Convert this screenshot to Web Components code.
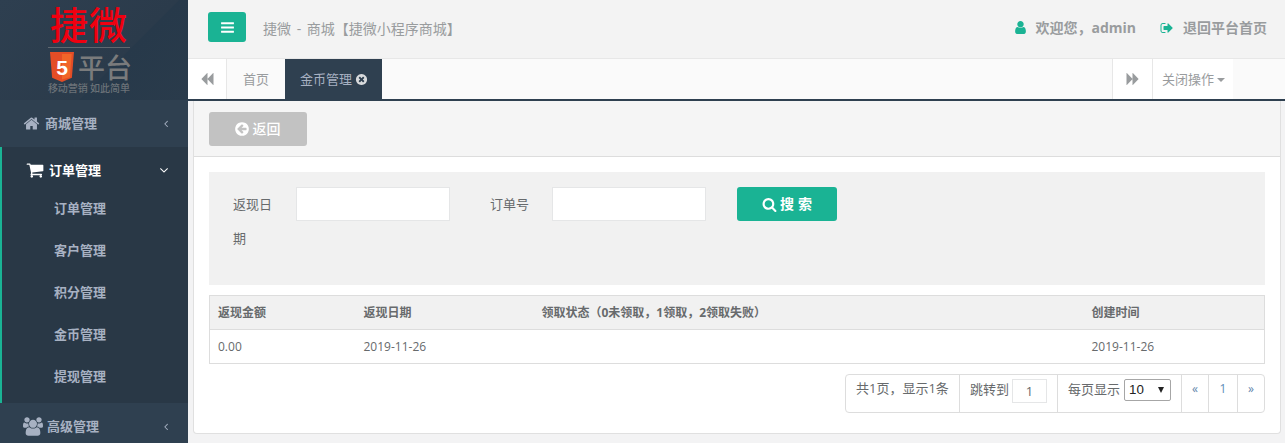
<!DOCTYPE html>
<html lang="zh-CN"><head><meta charset="utf-8"><title>捷微</title>
<style>
html,body{margin:0;padding:0;height:443px;overflow:hidden;background:#f3f3f4}
body{font:13px/1.42857 "Open Sans","Noto Sans CJK SC",sans-serif;color:#676a6c}
app-shell{height:443px}
</style></head><body>
<app-shell>
  <app-sidebar slot="side">
    <brand-logo></brand-logo>
    <nav-group label="商城管理" icon="home"></nav-group>
    <nav-group label="订单管理" icon="cart" open>
      <nav-sub>订单管理</nav-sub><nav-sub>客户管理</nav-sub><nav-sub>积分管理</nav-sub><nav-sub>金币管理</nav-sub><nav-sub>提现管理</nav-sub>
    </nav-group>
    <nav-group label="高级管理" icon="users"></nav-group>
  </app-sidebar>
  <top-bar></top-bar>
  <tab-bar></tab-bar>
  <page-card>
    <search-panel></search-panel>
    <data-table></data-table>
    <pager-bar></pager-bar>
  </page-card>
</app-shell>
<script>
const P={
home:['0 0 1792 1792','M1472 992v480q0 26-19 45t-45 19h-384v-384h-256v384h-384q-26 0-45-19t-19-45v-480q0-1 .5-3t.5-3l575-474 575 474q1 2 1 6zm223-69l-62 74q-8 9-21 11h-3q-13 0-21-7l-692-577-692 577q-12 8-24 7-13-2-21-11l-62-74q-8-10-7-23.5t11-21.5l719-599q32-26 76-26t76 26l244 204v-195q0-14 9-23t23-9h192q14 0 23 9t9 23v408l219 182q10 8 11 21.5t-7 23.5z'],
cart:['0 0 1792 1792','M704 1536q0 52-38 90t-90 38-90-38-38-90 38-90 90-38 90 38 38 90zm896 0q0 52-38 90t-90 38-90-38-38-90 38-90 90-38 90 38 38 90zm128-1088v512q0 24-16.5 42.5t-40.5 21.5l-1044 122q13 60 13 70 0 16-24 64h920q26 0 45 19t19 45-19 45-45 19h-1024q-26 0-45-19t-19-45q0-11 8-31.5t16-36 21.5-40 15.5-29.5l-177-823h-204q-26 0-45-19t-19-45 19-45 45-19h256q16 0 28.5 6.5t19.5 15.5 13 24.5 8 26 5.5 29.5 4.5 26h1201q26 0 45 19t19 45z'],
users:['0 0 1920 1792','M593 896q-162 5-265 128h-134q-82 0-138-40.5t-56-118.5q0-353 124-353 6 0 43.5 21t97.5 42.5 119 21.5q67 0 133-23-5 37-5 66 0 139 81 256zm1071 637q0 120-73 189.5t-194 69.5h-874q-121 0-194-69.5t-73-189.5q0-53 3.5-103.5t14-109 26.5-108.5 43-97.5 62-81 85.5-53.5 111.5-20q10 0 43 21.5t73 48 107 48 135 21.5 135-21.5 107-48 73-48 43-21.5q61 0 111.5 20t85.5 53.5 62 81 43 97.5 26.5 108.5 14 109 3.5 103.5zm-1024-1277q0 106-75 181t-181 75-181-75-75-181 75-181 181-75 181 75 75 181zm704 384q0 159-112.5 271.5t-271.5 112.5-271.5-112.5-112.5-271.5 112.5-271.5 271.5-112.5 271.5 112.5 112.5 271.5zm576 225q0 78-56 118.5t-138 40.5h-134q-103-123-265-128 81-117 81-256 0-29-5-66 66 23 133 23 59 0 119-21.5t97.5-42.5 43.5-21q124 0 124 353zm-128-609q0 106-75 181t-181 75-181-75-75-181 75-181 181-75 181 75 75 181z'],
bars:['0 0 1792 1792','M1664 1344v128q0 26-19 45t-45 19h-1408q-26 0-45-19t-19-45v-128q0-26 19-45t45-19h1408q26 0 45 19t19 45zm0-512v128q0 26-19 45t-45 19h-1408q-26 0-45-19t-19-45v-128q0-26 19-45t45-19h1408q26 0 45 19t19 45zm0-512v128q0 26-19 45t-45 19h-1408q-26 0-45-19t-19-45v-128q0-26 19-45t45-19h1408q26 0 45 19t19 45z'],
user:['0 0 1792 1792','M1536 1399q0 109-62.5 187t-150.5 78h-854q-88 0-150.5-78t-62.5-187q0-85 8.5-160.5t31.5-152 58.5-131 94-89 134.5-34.5q131 128 313 128t313-128q76 0 134.5 34.5t94 89 58.5 131 31.5 152 8.5 160.5zm-256-887q0 159-112.5 271.5t-271.5 112.5-271.5-112.5-112.5-271.5 112.5-271.5 271.5-112.5 271.5 112.5 112.5 271.5z'],
out:['0 0 1792 1792','M704 1440q0 4 1 20t.5 26.5-3 23.5-10 19.5-20.5 6.5h-320q-119 0-203.5-84.5t-84.5-203.5v-704q0-119 84.5-203.5t203.5-84.5h320q13 0 22.5 9.5t9.5 22.5q0 4 1 20t.5 26.5-3 23.5-10 19.5-20.5 6.5h-320q-66 0-113 47t-47 113v704q0 66 47 113t113 47h288l11.5 1 11.5 3 8 5.5 7 9 2 13.5zm928-544q0 26-19 45l-544 544q-19 19-45 19t-45-19-19-45v-288h-448q-26 0-45-19t-19-45v-384q0-26 19-45t45-19h448v-288q0-26 19-45t45-19 45 19l544 544q19 19 19 45z'],
search:['0 0 1792 1792','M1216 832q0-185-131.5-316.5t-316.5-131.5-316.5 131.5-131.5 316.5 131.5 316.5 316.5 131.5 316.5-131.5 131.5-316.5zm512 832q0 52-38 90t-90 38q-54 0-90-38l-343-342q-179 124-399 124-143 0-273.5-55.5t-225-150-150-225-55.5-273.5 55.5-273.5 150-225 225-150 273.5-55.5 273.5 55.5 225 150 150 225 55.5 273.5q0 220-124 399l343 343q37 37 37 90z'],
back:['0 0 1792 1792','M1683 141q19-19 32-13t13 32v1472q0 26-13 32t-32-13l-710-710q-9-9-13-19v710q0 26-13 32t-32-13l-710-710q-19-19-19-45t19-45l710-710q19-19 32-13t13 32v710q4-10 13-19z'],
fwd:['0 0 1792 1792','M109 1651q-19 19-32 13t-13-32v-1472q0-26 13-32t32 13l710 710q9 9 13 19v-710q0-26 13-32t32 13l710 710q19 19 19 45t-19 45l-710 710q-19 19-32 13t-13-32v-710q-4 10-13 19z'],
times:['0 0 1792 1792','M1277 1122q0-26-19-45l-181-181 181-181q19-19 19-45 0-27-19-46l-90-90q-19-19-46-19-26 0-45 19l-181 181-181-181q-19-19-45-19-27 0-46 19l-90 90q-19 19-19 46 0 26 19 45l181 181-181 181q-19 19-19 45 0 27 19 46l90 90q19 19 46 19 26 0 45-19l181-181 181 181q19 19 45 19 27 0 46-19l90-90q19-19 19-46zm387-226q0 209-103 385.5t-279.5 279.5-385.5 103-385.5-103-279.5-279.5-103-385.5 103-385.5 279.5-279.5 385.5-103 385.5 103 279.5 279.5 103 385.5z'],
circleLeft:['0 0 1792 1792','M1408 960v-128q0-26-19-45t-45-19h-502l189-189q19-19 19-45t-19-45l-91-91q-18-18-45-18t-45 18l-362 362-91 91q-18 18-18 45t18 45l91 91 362 362q18 18 45 18t45-18l91-91q18-18 18-45t-18-45l-189-189h502q26 0 45-19t19-45zm256-64q0 209-103 385.5t-279.5 279.5-385.5 103-385.5-103-279.5-279.5-103-385.5 103-385.5 279.5-279.5 385.5-103 385.5 103 279.5 279.5 103 385.5z'],
angleL:['0 0 640 1792','M627 544q0 13-10 23l-393 393 393 393q10 10 10 23t-10 23l-50 50q-10 10-23 10t-23-10l-466-466q-10-10-10-23t10-23l466-466q10-10 23-10t23 10l50 50q10 10 10 23z'],
angleD:['0 0 1792 1792','M1395 736q0 13-10 23l-466 466q-10 10-23 10t-23-10l-466-466q-10-10-10-23t10-23l50-50q10-10 23-10t23 10l393 393 393-393q10-10 23-10t23 10l50 50q10 10 10 23z']
};
const ico=(n,w,h,c,extra='')=>`<svg viewBox="${P[n][0]}" width="${w}" height="${h}" fill="${c}" style="display:block;flex:none;${extra}" aria-hidden="true"><path d="${P[n][1]}"/></svg>`;
const def=(name,html)=>customElements.define(name,class extends HTMLElement{
  connectedCallback(){ if(this.shadowRoot) return; const r=this.attachShadow({mode:'open'}); r.innerHTML=typeof html==='function'?html(this):html; }
});

def('app-shell',`<style>
:host{display:grid;grid-template-columns:188px 1fr;grid-template-rows:59px 42px 1fr;width:1285px}
.s{grid-row:1/4;display:block}
</style><slot name="side" class="s"></slot><slot></slot>`);

def('app-sidebar',`<style>:host{display:block;height:443px;background:#2f4050;overflow:hidden}</style><slot></slot>`);

def('brand-logo',`<style>
:host{display:block;height:100px;box-sizing:border-box;background:linear-gradient(135deg,#2e3f50 0,#2b3b4b 62%,#27394a 62.5%,#2a3b4b 100%);font-family:"Noto Sans CJK SC",sans-serif}
.w{width:84px;margin-left:47px;display:flex;flex-direction:column;align-items:center;padding-top:6px}
.t{color:#f00010;font-size:38px;font-weight:500;line-height:33px;letter-spacing:1px;height:41px;white-space:nowrap}
.r{height:1px;background:#5f6870;width:82px;margin-bottom:4px}
.m{display:flex;align-items:center;gap:4px;height:30px;width:82px;padding-left:2px;box-sizing:border-box}
.p{color:#7a7b7c;font-size:27px;font-weight:500;line-height:28px;white-space:nowrap}
.c{color:#6b7278;font-size:10px;line-height:12px;white-space:nowrap;font-weight:500}
svg text{font:900 22px "Liberation Sans",sans-serif}
</style><div class="w"><div class="t">捷微</div><div class="r"></div>
<div class="m"><svg width="24" height="30" viewBox="0 0 25 31" style="flex:none"><path d="M0 0h25l-2.2 26.6L12.5 31 2.2 26.6z" fill="#e44d26"/><path d="M12.5 2v26.6l8.2-2.4L22.6 2z" fill="#f16529"/><text x="12.5" y="23.5" text-anchor="middle" fill="#fff">5</text></svg><span class="p">平台</span></div>
<div class="c">移动营销 如此简单</div></div>`);

def('nav-group',h=>{
 const open=h.hasAttribute('open'), ic=h.getAttribute('icon');
 const size=ic==='users'?[20,19]:ic==='home'?[17,17]:[18,18];
 return `<style>
:host{display:block;font-weight:700;color:${open?'#fff':'#a7b1c2'};background:${open?'#293846':'#2f4050'};${open?'border-left:2px solid #1ab394;padding-bottom:5px;':''}}
.h{display:flex;align-items:center;height:47px;padding-left:${open?24:23}px;box-sizing:border-box;${open?'height:46px;margin-bottom:-5px':''}}
.i{width:${open?23:ic==='users'?24:22}px;flex:none}
.l{flex:1}
.c{margin-right:${open?17:20}px}
</style><div class="h"><span class="i">${ico(ic,size[0],size[1],open?'#fff':'#a7b1c2')}</span><span class="l">${h.getAttribute('label')}</span><span class="c">${open?ico('angleD',14,14,'#fff'):ico('angleL',4,13,'#a7b1c2')}</span></div><slot></slot>`;
});
def('nav-sub',`<style>:host{display:flex;align-items:center;height:42px;padding-left:52px;color:#a7b1c2;font-weight:700;box-sizing:border-box;padding-bottom:1px}</style><slot></slot>`);

def('top-bar',`<style>
:host{display:flex;align-items:center;background:#f3f3f3;padding:0 18px 0 20px;color:#999c9e;height:59px;box-sizing:border-box;border-bottom:1px solid #e7e7e7;font-size:14px}
.b{width:38px;height:30px;background:#1ab394;border-radius:3px;display:flex;align-items:center;justify-content:center;margin:0 17px 4px 0;flex:none}
.s{flex:1;color:#999c9e;word-spacing:2px}
.r{display:flex;align-items:center;font-weight:700;margin-bottom:2px}
</style><span class="b">${ico('bars',15,15,'#fff')}</span><span class="s">捷微 - 商城【捷微小程序商城】</span>
<span class="r">${ico('user',15,15,'#1ab394','margin-right:7px')}<span>欢迎您，admin</span>${ico('out',14,14,'#1ab394','margin:0 9px 0 24px')}<span>退回平台首页</span></span>`);

def('tab-bar',`<style>
:host{display:flex;height:42px;box-sizing:border-box;background:#fafafa;border-bottom:2px solid #2f4050;color:#999c9e}
.a{width:38px;display:flex;align-items:center;justify-content:center;background:#fff;border-right:1px solid #e7e7e7}
.t{padding:0 16px;display:flex;align-items:center}
.on{background:#2f4050;color:#a7b1c2;gap:3px;padding:0 15px}
.sp{flex:1}
.n{border-left:1px solid #e7e7e7;border-right:1px solid #e7e7e7;width:39px;background:#fff}
.d{width:80px;background:#fff;display:flex;align-items:center;padding-left:9px;box-sizing:border-box;gap:3px}
.e{width:52px}
.tri{width:0;height:0;border:4px solid transparent;border-top-color:#999c9e;border-bottom:0;margin-top:2px}
</style><span class="a">${ico('back',14,14,'#999c9e')}</span><span class="t">首页</span><span class="t on">金币管理${ico('times',13,13,'#d8dadc','margin-right:-1px')}</span><span class="sp"></span>
<span class="a n">${ico('fwd',14,14,'#999c9e')}</span><span class="d">关闭操作<i class="tri"></i></span><span class="e"></span>`);

def('page-card',`<style>
:host{display:block;margin:0 4px 9px 5px;background:#fff;border:1px solid #e0e0e0;border-top:0;border-radius:0 0 4px 4px;height:333px;box-sizing:border-box}
.h{height:56px;background:#f5f5f5;border-bottom:1px solid #ddd;padding:11px 15px 0;box-sizing:border-box}
.b{width:98px;height:34px;border-radius:3px;background:#c2c2c2;color:#fff;display:flex;align-items:center;justify-content:center;gap:3px;font-size:14px;font-weight:500;padding-right:2px;box-sizing:border-box}
.c{padding:15px 15px 0}
</style><div class="h"><div class="b">${ico('circleLeft',16,16,'#fff')}<span>返回</span></div></div><div class="c"><slot></slot></div>`);

def('search-panel',`<style>
:host{display:flex;align-items:flex-start;height:113px;box-sizing:border-box;background:#f1f1f1;padding:15px 0 0 24px;margin-bottom:10px;color:#676a6c}
label{width:42px;line-height:34px;flex:none}
.i{width:154px;height:34px;box-sizing:border-box;border:1px solid #e5e6e7;background:#fff;flex:none;display:block;padding:0;margin:0 40px 0 21px;outline:0}
.j{margin-right:31px}
label.k{width:41px;white-space:nowrap}
.b{width:100px;height:34px;background:#1ab394;border-radius:3px;color:#fff;font-weight:700;font-size:14px;display:flex;align-items:center;justify-content:center;gap:3px;flex:none}
.b span{letter-spacing:4px;margin-right:-4px}
</style><label>返现日期</label><input class="i" aria-label="返现日期"><label class="k">订单号</label><input class="i j" aria-label="订单号"><span class="b">${ico('search',15,15,'#fff')}<span>搜索</span></span>`);

def('data-table',`<style>
:host{display:block;margin-bottom:10px}
table{width:100%;border-collapse:collapse;table-layout:fixed;font-size:12px;color:#676a6c;border-left:1px solid #ddd;border-right:1px solid #ddd}
td,th{border-top:1px solid #ddd;border-bottom:1px solid #ddd;padding:0 8px;height:34px;text-align:left;box-sizing:border-box}
th{background:#f1f1f1;font-weight:700}
</style><table><colgroup><col style="width:146px"><col style="width:178px"><col style="width:550px"><col></colgroup>
<tr><th>返现金额</th><th>返现日期</th><th>领取状态（0未领取，1领取，2领取失败）</th><th>创建时间</th></tr>
<tr><td>0.00</td><td>2019-11-26</td><td></td><td>2019-11-26</td></tr></table>`);

def('pager-bar',`<style>
:host{display:flex;justify-content:flex-end}
.w{display:flex;height:39px;box-sizing:border-box;border:1px solid #ddd;border-radius:4px;color:#676a6c;background:#fff}
.c{border-left:1px solid #ddd;display:flex;align-items:flex-start;padding-top:4px;box-sizing:border-box;white-space:nowrap}
.c:first-child{border-left:0;width:113px;padding-left:10px;line-height:24px;padding-top:1px}
.j{width:98px;padding-left:10px;gap:3px}
.j span,.p span{line-height:20px}
.in{width:35px;height:24px;box-sizing:border-box;border:1px solid #e5e6e7;display:flex;align-items:center;justify-content:center;color:#676a6c}
.p{width:124px;padding-left:10px;gap:4px}
.sel{width:47px;height:22px;box-sizing:border-box;border:1px solid #a6a6a6;border-radius:2px;display:flex;align-items:center;justify-content:space-between;padding:0 6px 0 4px;color:#222;font-family:"Liberation Sans",sans-serif;font-size:13.33px}
.tr{width:0;height:0;border-left:3.5px solid transparent;border-right:3.5px solid transparent;border-top:6px solid #222}
.n{justify-content:center;padding-top:3px;line-height:22px;font-size:12px;color:#5f86ab}
.one{color:#5e8cb8}
</style><div class="w"><div class="c">共1页，显示1条</div>
<div class="c j"><span>跳转到</span><div class="in">1</div></div>
<div class="c p"><span>每页显示</span><div class="sel">10<i class="tr"></i></div></div>
<div class="c n" style="width:27px">«</div><div class="c n one" style="width:29px">1</div><div class="c n" style="width:27px">»</div></div>`);
</script>
</body></html>
